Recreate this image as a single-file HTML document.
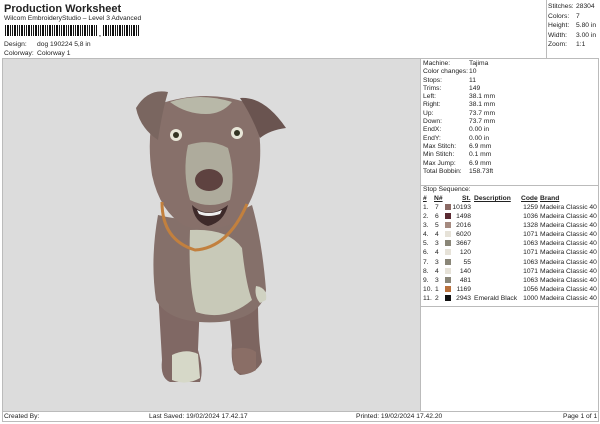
<!DOCTYPE html>
<html><head><meta charset="utf-8"><style>
*{margin:0;padding:0;box-sizing:border-box}
body{width:600px;height:424px;background:#fff;font-family:"Liberation Sans",Arial,sans-serif;font-size:6.7px;color:#222;position:relative;overflow:hidden}
.a{position:absolute;white-space:nowrap;line-height:8px}
.b{position:absolute;border:1px solid #bbb}
</style></head><body>
<div class="a" style="left:4px;top:3px;font-size:11px;font-weight:bold;line-height:12px">Production Worksheet</div>
<div class="a" style="left:4px;top:15px">Wilcom EmbroideryStudio – Level 3 Advanced</div>
<div class="a" style="left:5px;top:25px;width:134px;height:11px;background:repeating-linear-gradient(90deg,#111 0 1px,#fff 1px 2px,#111 2px 4px,#fff 4px 5px,#111 5px 6px,#fff 6px 7px)"></div>
<div class="a" style="left:98px;top:25px;width:4px;height:11px;background:#fff"></div>
<div class="a" style="left:99px;top:31px;font-weight:bold">,</div>
<div class="a" style="left:4px;top:41px">Design:</div><div class="a" style="left:37px;top:41px">dog 190224 5,8 in</div>
<div class="a" style="left:4px;top:50px">Colorway:</div><div class="a" style="left:37px;top:50px">Colorway 1</div>
<div class="b" style="left:546px;top:0;width:53px;height:59px;border-top:none;border-right:none"></div>
<div class="a" style="left:548px;top:2px;line-height:9.6px">Stitches:<br>Colors:<br>Height:<br>Width:<br>Zoom:</div>
<div class="a" style="left:576px;top:2px;line-height:9.6px">28304<br>7<br>5.80 in<br>3.00 in<br>1:1</div>
<div class="b" style="left:2px;top:58px;width:419px;height:354px;background:#dcdcdc"></div>
<div class="b" style="left:420px;top:58px;width:179px;height:354px"></div>
<div class="a" style="left:423px;top:60px;line-height:8.3px">Machine:<br>Color changes:<br>Stops:<br>Trims:<br>Left:<br>Right:<br>Up:<br>Down:<br>EndX:<br>EndY:<br>Max Stitch:<br>Min Stitch:<br>Max Jump:<br>Total Bobbin:</div>
<div class="a" style="left:469px;top:60px;line-height:8.3px">Tajima<br>10<br>11<br>149<br>38.1 mm<br>38.1 mm<br>73.7 mm<br>73.7 mm<br>0.00 in<br>0.00 in<br>6.9 mm<br>0.1 mm<br>6.9 mm<br>158.73ft</div>
<div style="position:absolute;left:421px;top:185px;width:177px;border-top:1px solid #bbb"></div>
<div class="a" style="left:423px;top:186px">Stop Sequence:</div>
<div style="position:absolute;left:421px;top:306px;width:177px;border-top:1px solid #bbb"></div>
<div class="a" style="left:423px;top:195px;font-weight:bold;text-decoration:underline">#</div>
<div class="a" style="left:434px;top:195px;font-weight:bold;text-decoration:underline">N#</div>
<div class="a" style="left:462px;top:195px;font-weight:bold;text-decoration:underline">St.</div>
<div class="a" style="left:474px;top:195px;font-weight:bold;text-decoration:underline">Description</div>
<div class="a" style="left:521px;top:195px;font-weight:bold;text-decoration:underline">Code</div>
<div class="a" style="left:540px;top:195px;font-weight:bold;text-decoration:underline">Brand</div>
<div class="a" style="left:423px;top:203px;line-height:9.1px">1.<br>2.<br>3.<br>4.<br>5.<br>6.<br>7.<br>8.<br>9.<br>10.<br>11.</div>
<div class="a" style="left:435px;top:203px;line-height:9.1px">7<br>6<br>5<br>4<br>3<br>4<br>3<br>4<br>3<br>1<br>2</div>
<div class="a" style="left:452px;top:203px;line-height:9.1px;text-align:right;width:19px">10193<br>1498<br>2016<br>6020<br>3667<br>120<br>55<br>140<br>481<br>1169<br>2943</div>
<div class="a" style="left:474px;top:203px;line-height:9.1px"><br><br><br><br><br><br><br><br><br><br>Emerald Black</div>
<div class="a" style="left:516px;top:203px;line-height:9.1px;text-align:right;width:22px">1259<br>1036<br>1328<br>1071<br>1063<br>1071<br>1063<br>1071<br>1063<br>1056<br>1000</div>
<div class="a" style="left:540px;top:203px;line-height:9.1px">Madeira Classic 40<br>Madeira Classic 40<br>Madeira Classic 40<br>Madeira Classic 40<br>Madeira Classic 40<br>Madeira Classic 40<br>Madeira Classic 40<br>Madeira Classic 40<br>Madeira Classic 40<br>Madeira Classic 40<br>Madeira Classic 40</div>
<div style="position:absolute;left:445px;top:204px">
<div style="width:6px;height:6px;background:#8b6b66;margin-bottom:3.1px"></div>
<div style="width:6px;height:6px;background:#5a2a32;margin-bottom:3.1px"></div>
<div style="width:6px;height:6px;background:#a58a80;margin-bottom:3.1px"></div>
<div style="width:6px;height:6px;background:#e6e2d8;margin-bottom:3.1px"></div>
<div style="width:6px;height:6px;background:#8a8678;margin-bottom:3.1px"></div>
<div style="width:6px;height:6px;background:#e6e2d8;margin-bottom:3.1px"></div>
<div style="width:6px;height:6px;background:#8a8678;margin-bottom:3.1px"></div>
<div style="width:6px;height:6px;background:#e6e2d8;margin-bottom:3.1px"></div>
<div style="width:6px;height:6px;background:#8a8678;margin-bottom:3.1px"></div>
<div style="width:6px;height:6px;background:#b8703c;margin-bottom:3.1px"></div>
<div style="width:6px;height:6px;background:#111"></div>
</div>
<svg style="position:absolute;left:0;top:0" width="600" height="424">
<g>
<path d="M158 290 L162 360 Q160 378 170 382 L200 382 Q204 370 198 350 L200 300 Z" fill="#806864"/>
<path d="M228 295 L232 345 Q230 370 240 375 Q256 374 262 362 Q258 340 258 300 Z" fill="#7d6560"/>
<path d="M158 215 Q150 260 156 300 Q170 325 220 322 Q262 318 266 290 Q262 240 252 205 Q210 228 158 215 Z" fill="#85706a"/>
<path d="M190 230 Q228 228 242 248 Q246 285 252 300 Q226 322 196 312 Q188 285 190 230 Z" fill="#c8c9b8"/>
<path d="M172 355 Q186 348 198 354 L200 378 Q186 386 172 380 Z" fill="#d6d8c8"/>
<path d="M232 350 Q246 345 256 352 L256 370 Q244 378 234 370 Z" fill="#8a6e66"/>
<path d="M256 286 Q268 288 266 300 L260 303 Q254 296 256 286Z" fill="#d0d2c2"/>
<path d="M156 105 Q146 135 152 175 Q160 212 185 226 Q210 234 236 222 Q258 198 260 160 Q262 122 248 103 Q205 88 156 105 Z" fill="#87706a"/>
<path d="M136 108 Q148 88 168 92 Q162 112 158 140 Q140 128 136 108Z" fill="#7a6660"/>
<path d="M240 98 Q264 96 286 128 Q270 130 260 138 Q252 116 240 98Z" fill="#6a5450"/>
<path d="M170 102 Q200 92 232 102 Q222 114 206 114 Q186 114 170 102Z" fill="#b8b8a8"/>
<path d="M188 145 Q210 138 228 148 Q236 175 230 200 Q210 210 190 200 Q182 172 188 145Z" fill="#aeab9c"/>
<ellipse cx="209" cy="180" rx="14" ry="11" fill="#5e4240"/>
<path d="M192 205 Q208 220 228 205 Q224 222 208 226 Q194 222 192 205Z" fill="#3e2a2a"/>
<path d="M197 210 Q208 216 222 210 L220 214 Q208 218 199 214Z" fill="#eee"/>
<ellipse cx="176" cy="135" rx="6" ry="6" fill="#e8e6d8"/><circle cx="176" cy="135" r="3" fill="#332"/>
<ellipse cx="237" cy="133" rx="6" ry="6" fill="#e8e6d8"/><circle cx="237" cy="133" r="3" fill="#332"/>
<path d="M162 202 Q162 240 195 250 Q228 248 247 204" fill="none" stroke="#c2803e" stroke-width="3"/>
</g>
</svg>
<div class="b" style="left:2px;top:411px;width:597px;height:11px"></div>
<div class="a" style="left:4px;top:413px">Created By:</div>
<div class="a" style="left:149px;top:413px">Last Saved: 19/02/2024 17.42.17</div>
<div class="a" style="left:356px;top:413px">Printed: 19/02/2024 17.42.20</div>
<div class="a" style="left:563px;top:413px">Page 1 of 1</div>
</body></html>
